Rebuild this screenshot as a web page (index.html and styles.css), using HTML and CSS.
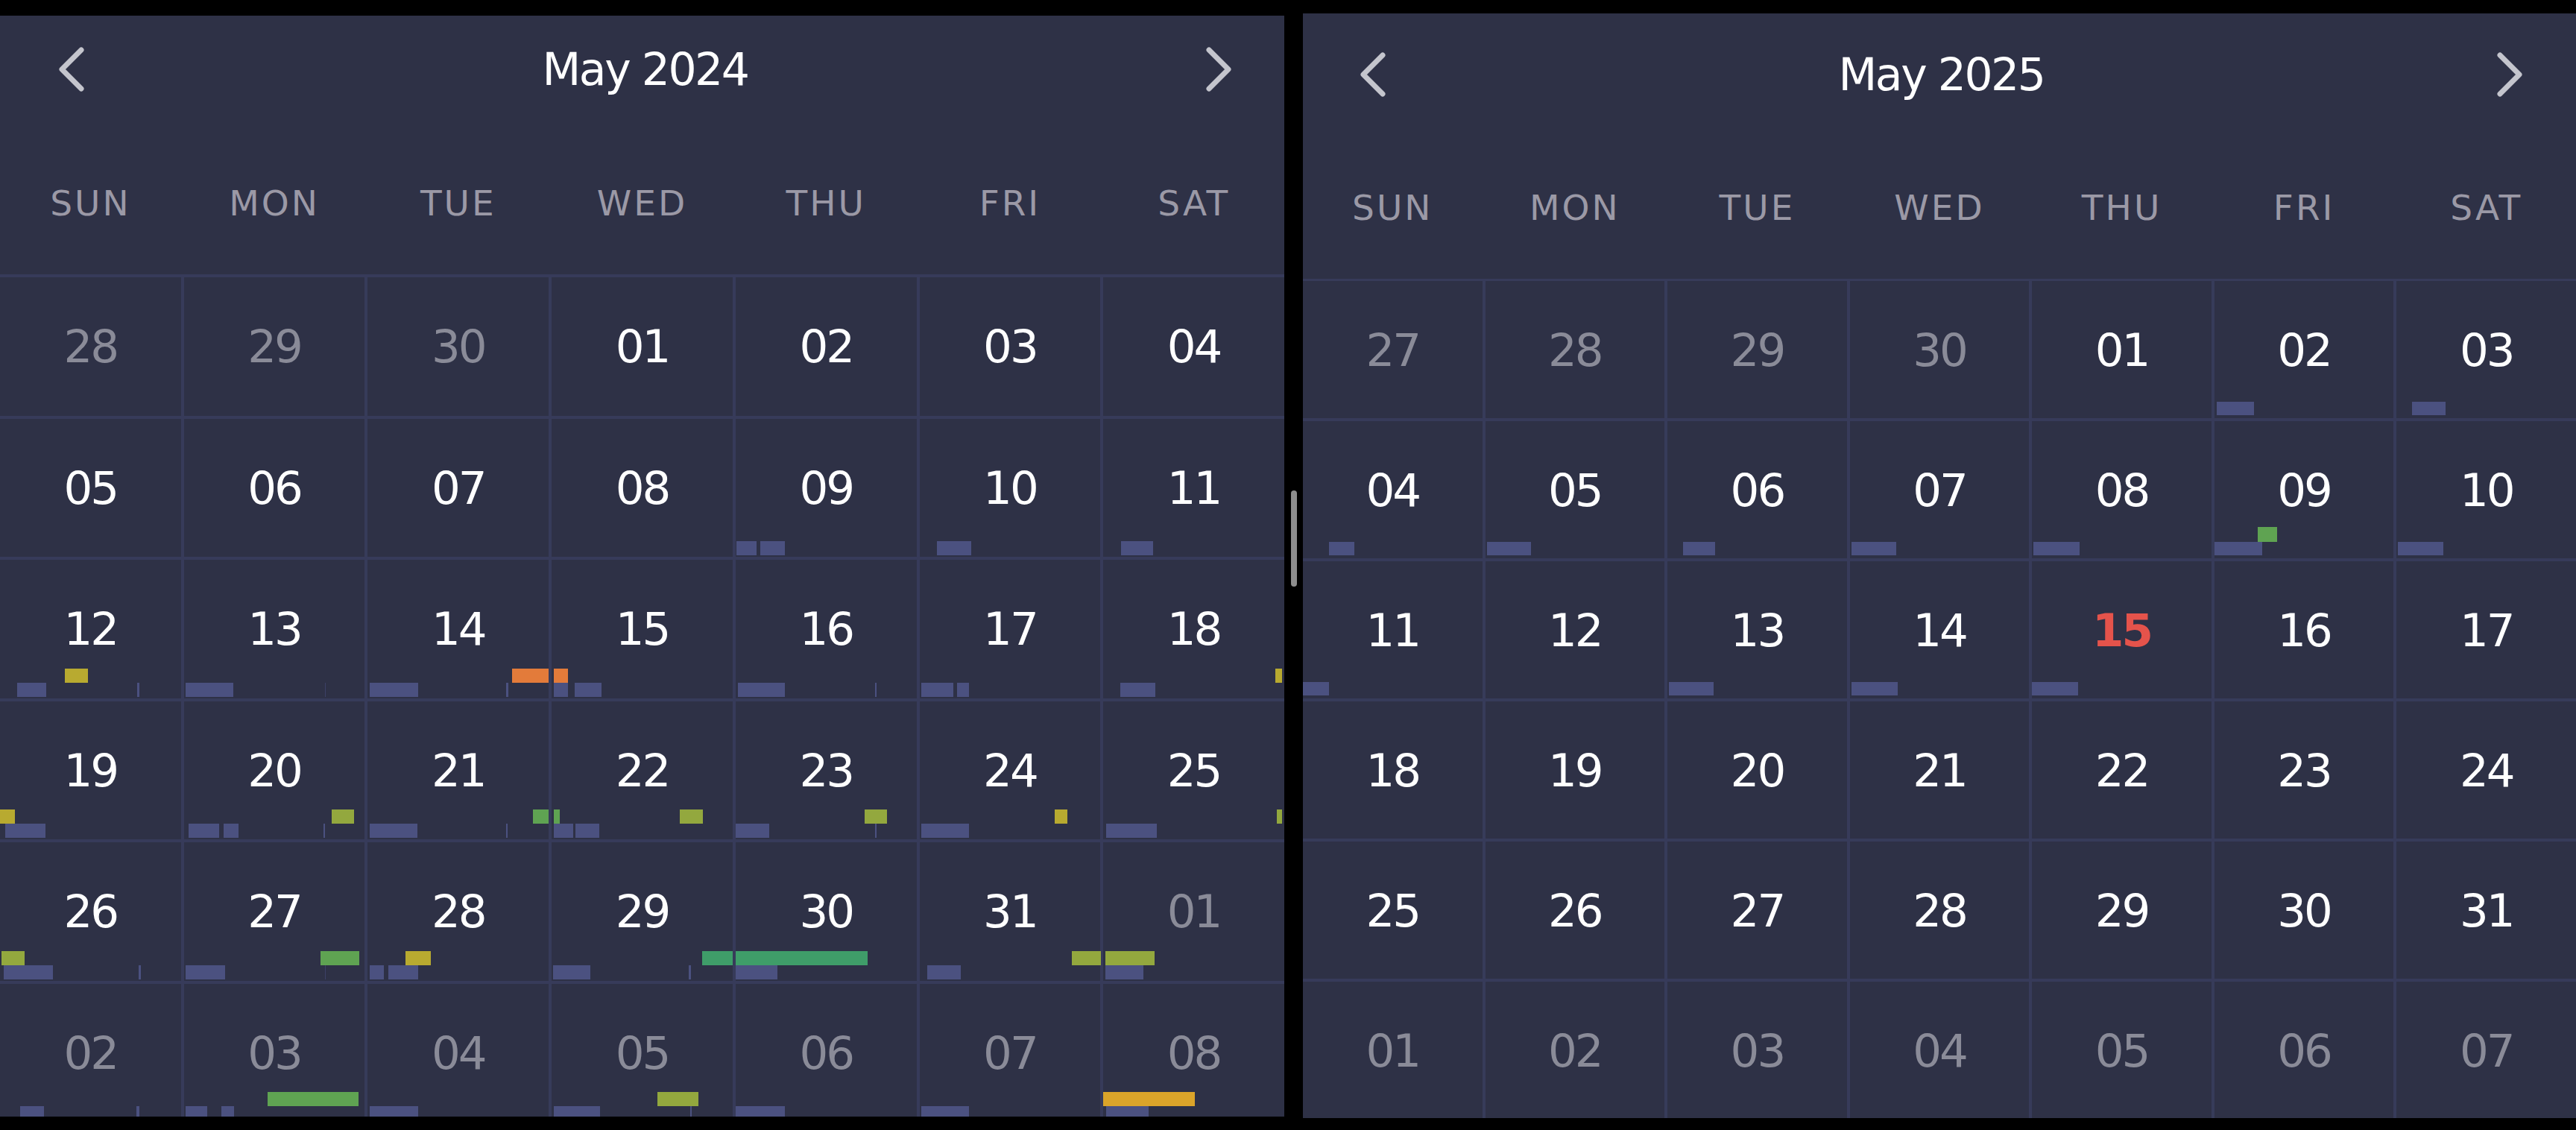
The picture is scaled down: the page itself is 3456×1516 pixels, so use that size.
FILE: index.html
```html
<!DOCTYPE html>
<html lang="en">
<head>
<meta charset="utf-8">
<title>Calendar</title>
<link rel="stylesheet" href="styles.css">
</head>
<body>
<div class="screen">
  <section class="panel panel-a">
    <header class="head">
      <svg class="chev chev-l" viewBox="0 0 36 60" width="36" height="60"><polyline points="31,4 5,30 31,56"/></svg>
      <div class="title">May 2024</div>
      <svg class="chev chev-r" viewBox="0 0 36 60" width="36" height="60"><polyline points="5,4 31,30 5,56"/></svg>
    </header>
    <div class="weekdays">
      <span>SUN</span><span>MON</span><span>TUE</span><span>WED</span><span>THU</span><span>FRI</span><span>SAT</span>
    </div>
    <div class="days">
      <div class="cell other">28</div>
      <div class="cell other">29</div>
      <div class="cell other">30</div>
      <div class="cell">01</div>
      <div class="cell">02</div>
      <div class="cell">03</div>
      <div class="cell">04</div>

      <div class="cell">05</div>
      <div class="cell">06</div>
      <div class="cell">07</div>
      <div class="cell">08</div>
      <div class="cell">09<span class="bar lo" style="left:1px;width:27px"></span><span class="bar lo" style="left:33px;width:33px"></span></div>
      <div class="cell">10<span class="bar lo" style="left:23px;width:46px"></span></div>
      <div class="cell">11<span class="bar lo" style="left:24px;width:43px"></span></div>

      <div class="cell">12<span class="bar lo" style="left:23px;width:39px"></span><span class="bar hi yel" style="left:87px;width:31px"></span><span class="bar lo" style="left:184px;width:3px"></span></div>
      <div class="cell">13<span class="bar lo" style="left:2px;width:64px"></span><span class="bar lo faint" style="left:189px;width:1px"></span></div>
      <div class="cell">14<span class="bar lo" style="left:3px;width:65px"></span><span class="bar lo" style="left:186px;width:3px"></span><span class="bar hi org" style="left:194px;width:49px"></span></div>
      <div class="cell">15<span class="bar hi org" style="left:3px;width:19px"></span><span class="bar lo" style="left:3px;width:19px"></span><span class="bar lo" style="left:31px;width:36px"></span></div>
      <div class="cell">16<span class="bar lo" style="left:3px;width:63px"></span><span class="bar lo" style="left:187px;width:2px"></span></div>
      <div class="cell">17<span class="bar lo" style="left:2px;width:43px"></span><span class="bar lo" style="left:50px;width:16px"></span></div>
      <div class="cell">18<span class="bar lo" style="left:23px;width:47px"></span><span class="bar hi yel" style="left:231px;width:9px"></span></div>

      <div class="cell">19<span class="bar hi yel" style="left:0;width:20px"></span><span class="bar lo" style="left:7px;width:54px"></span></div>
      <div class="cell">20<span class="bar lo" style="left:6px;width:41px"></span><span class="bar lo" style="left:53px;width:20px"></span><span class="bar lo" style="left:187px;width:2px"></span><span class="bar hi yg" style="left:198px;width:30px"></span></div>
      <div class="cell">21<span class="bar lo" style="left:3px;width:64px"></span><span class="bar lo" style="left:186px;width:2px"></span><span class="bar hi grn" style="left:222px;width:21px"></span></div>
      <div class="cell">22<span class="bar hi grn" style="left:3px;width:8px"></span><span class="bar lo" style="left:3px;width:26px"></span><span class="bar lo" style="left:32px;width:32px"></span><span class="bar hi yg" style="left:172px;width:31px"></span></div>
      <div class="cell">23<span class="bar lo" style="left:0;width:45px"></span><span class="bar lo" style="left:187px;width:2px"></span><span class="bar hi yg" style="left:173px;width:30px"></span></div>
      <div class="cell">24<span class="bar lo" style="left:2px;width:64px"></span><span class="bar hi yel" style="left:181px;width:17px"></span></div>
      <div class="cell">25<span class="bar lo" style="left:4px;width:68px"></span><span class="bar hi yg" style="left:233px;width:7px"></span></div>

      <div class="cell">26<span class="bar hi yg" style="left:2px;width:31px"></span><span class="bar lo" style="left:5px;width:66px"></span><span class="bar lo" style="left:186px;width:3px"></span></div>
      <div class="cell">27<span class="bar lo" style="left:2px;width:53px"></span><span class="bar hi grn" style="left:183px;width:52px"></span><span class="bar lo faint" style="left:189px;width:1px"></span></div>
      <div class="cell">28<span class="bar lo" style="left:3px;width:19px"></span><span class="bar lo" style="left:28px;width:40px"></span><span class="bar hi yel" style="left:51px;width:34px"></span></div>
      <div class="cell">29<span class="bar lo" style="left:2px;width:50px"></span><span class="bar hi teal" style="left:202px;width:41px"></span><span class="bar lo" style="left:184px;width:3px"></span></div>
      <div class="cell">30<span class="bar hi teal" style="left:0;width:177px"></span><span class="bar lo" style="left:0;width:56px"></span></div>
      <div class="cell">31<span class="bar lo" style="left:10px;width:45px"></span><span class="bar hi yg" style="left:204px;width:39px"></span></div>
      <div class="cell other">01<span class="bar hi yg" style="left:3px;width:66px"></span><span class="bar lo" style="left:3px;width:51px"></span></div>

      <div class="cell other">02<span class="bar lo" style="left:27px;width:32px"></span><span class="bar lo" style="left:183px;width:4px"></span></div>
      <div class="cell other">03<span class="bar lo" style="left:2px;width:29px"></span><span class="bar lo" style="left:50px;width:17px"></span><span class="bar hi grn" style="left:112px;width:122px"></span></div>
      <div class="cell other">04<span class="bar lo" style="left:3px;width:65px"></span></div>
      <div class="cell other">05<span class="bar lo" style="left:3px;width:62px"></span><span class="bar hi yg" style="left:142px;width:55px"></span><span class="bar lo" style="left:186px;width:2px"></span></div>
      <div class="cell other">06<span class="bar lo" style="left:0;width:66px"></span></div>
      <div class="cell other">07<span class="bar lo" style="left:2px;width:64px"></span></div>
      <div class="cell other">08<span class="bar hi gold" style="left:0;width:123px"></span><span class="bar lo" style="left:4px;width:57px"></span></div>
    </div>
  </section>

  <div class="gutter"><div class="thumb"></div></div>

  <section class="panel panel-b">
    <header class="head">
      <svg class="chev chev-l" viewBox="0 0 36 60" width="36" height="60"><polyline points="31,4 5,30 31,56"/></svg>
      <div class="title">May 2025</div>
      <svg class="chev chev-r" viewBox="0 0 36 60" width="36" height="60"><polyline points="5,4 31,30 5,56"/></svg>
    </header>
    <div class="weekdays">
      <span>SUN</span><span>MON</span><span>TUE</span><span>WED</span><span>THU</span><span>FRI</span><span>SAT</span>
    </div>
    <div class="days">
      <div class="cell other">27</div>
      <div class="cell other">28</div>
      <div class="cell other">29</div>
      <div class="cell other">30</div>
      <div class="cell">01</div>
      <div class="cell">02<span class="bar lo" style="left:3px;width:50px"></span></div>
      <div class="cell">03<span class="bar lo" style="left:21px;width:45px"></span></div>

      <div class="cell">04<span class="bar lo" style="left:35px;width:34px"></span></div>
      <div class="cell">05<span class="bar lo" style="left:2px;width:59px"></span></div>
      <div class="cell">06<span class="bar lo" style="left:21px;width:43px"></span></div>
      <div class="cell">07<span class="bar lo" style="left:2px;width:60px"></span></div>
      <div class="cell">08<span class="bar lo" style="left:2px;width:62px"></span></div>
      <div class="cell">09<span class="bar lo" style="left:0;width:64px"></span><span class="bar hi grn" style="left:58px;width:26px"></span></div>
      <div class="cell">10<span class="bar lo" style="left:2px;width:61px"></span></div>

      <div class="cell">11<span class="bar lo" style="left:0;width:35px"></span></div>
      <div class="cell">12</div>
      <div class="cell">13<span class="bar lo" style="left:2px;width:60px"></span></div>
      <div class="cell">14<span class="bar lo" style="left:2px;width:62px"></span></div>
      <div class="cell today">15<span class="bar lo" style="left:0;width:62px"></span></div>
      <div class="cell">16</div>
      <div class="cell">17</div>

      <div class="cell">18</div>
      <div class="cell">19</div>
      <div class="cell">20</div>
      <div class="cell">21</div>
      <div class="cell">22</div>
      <div class="cell">23</div>
      <div class="cell">24</div>

      <div class="cell">25</div>
      <div class="cell">26</div>
      <div class="cell">27</div>
      <div class="cell">28</div>
      <div class="cell">29</div>
      <div class="cell">30</div>
      <div class="cell">31</div>

      <div class="cell other">01</div>
      <div class="cell other">02</div>
      <div class="cell other">03</div>
      <div class="cell other">04</div>
      <div class="cell other">05</div>
      <div class="cell other">06</div>
      <div class="cell other">07</div>
    </div>
  </section>
</div>
</body>
</html>
```

FILE: styles.css
```css
html, body {
  margin: 0;
  padding: 0;
  background: #000;
}
body {
  width: 3456px;
  height: 1516px;
  overflow: hidden;
  font-family: "DejaVu Sans", "Liberation Sans", sans-serif;
}
.screen {
  display: flex;
  align-items: flex-start;
}
.panel {
  background: #2e3146;
  overflow: hidden;
  display: flex;
  flex-direction: column;
  flex: none;
}
.panel-a {
  width: 1723px;
  height: 1477px;
  margin-top: 21px;
}
.panel-b {
  width: 1708px;
  height: 1482px;
  margin-top: 18px;
}
.gutter {
  width: 25px;
  flex: none;
  box-sizing: border-box;
  padding-top: 658px;
  display: flex;
  justify-content: center;
}
.thumb {
  width: 8px;
  height: 129px;
  border-radius: 4px;
  background: #8e8e8e;
}

/* header */
.head {
  flex: none;
  box-sizing: border-box;
  display: grid;
  grid-template-columns: 1fr auto 1fr;
  align-items: center;
}
.panel-a .head {
  height: 144px;
  padding: 0 70px 0 78px;
}
.panel-b .head {
  height: 164px;
  padding: 0 71px 0 76px;
}
.chev {
  display: block;
}
.chev polyline {
  fill: none;
  stroke: #c4c5cd;
  stroke-width: 7;
  stroke-linecap: round;
  stroke-linejoin: round;
}
.chev-l { justify-self: start; }
.chev-r { justify-self: end; }
.title {
  color: #ffffff;
  font-size: 60px;
  line-height: 1;
  letter-spacing: -2.5px;
  white-space: nowrap;
}

/* weekday labels */
.weekdays {
  flex: none;
  box-sizing: border-box;
  display: grid;
  grid-template-columns: repeat(7, 1fr);
  column-gap: 4px;
  align-items: center;
  justify-items: center;
  color: #9b99a6;
  font-size: 47px;
  letter-spacing: 3px;
  line-height: 1;
}
.panel-a .weekdays {
  height: 203px;
  padding-top: 11px;
}
.panel-b .weekdays {
  height: 192px;
}

/* day grid */
.days {
  flex: none;
  display: grid;
  grid-template-columns: repeat(7, 1fr);
  gap: 4px;
  background: #373b5a;
}
.panel-a .days {
  border-top: 4px solid #373b5a;
  grid-template-rows: repeat(6, 185.5px);
}
.panel-b .days {
  border-top: 3px solid #373b5a;
  grid-template-rows: repeat(6, 184px);
}
.cell {
  background: #2e3146;
  position: relative;
  display: flex;
  align-items: center;
  justify-content: center;
  color: #ffffff;
  font-size: 61px;
  letter-spacing: -3px;
  line-height: 1;
}
.cell.other {
  color: #8a8b98;
}
.cell.today {
  color: #e5534b;
  font-weight: bold;
}

/* event bars */
.bar {
  position: absolute;
  background: #4b5180;
}
.panel-a .lo { bottom: 2px; height: 19px; }
.panel-a .hi { bottom: 21px; height: 19px; }
.panel-b .lo { bottom: 4px; height: 18px; }
.panel-b .hi { bottom: 22px; height: 20px; }
.bar.faint { background: #3c4166; }
.bar.yel { background: #b8aa30; }
.bar.yg { background: #93a83e; }
.bar.grn { background: #5fa352; }
.bar.teal { background: #3f9d69; }
.bar.org { background: #e37b3a; }
.bar.gold { background: #dba42a; }
```
